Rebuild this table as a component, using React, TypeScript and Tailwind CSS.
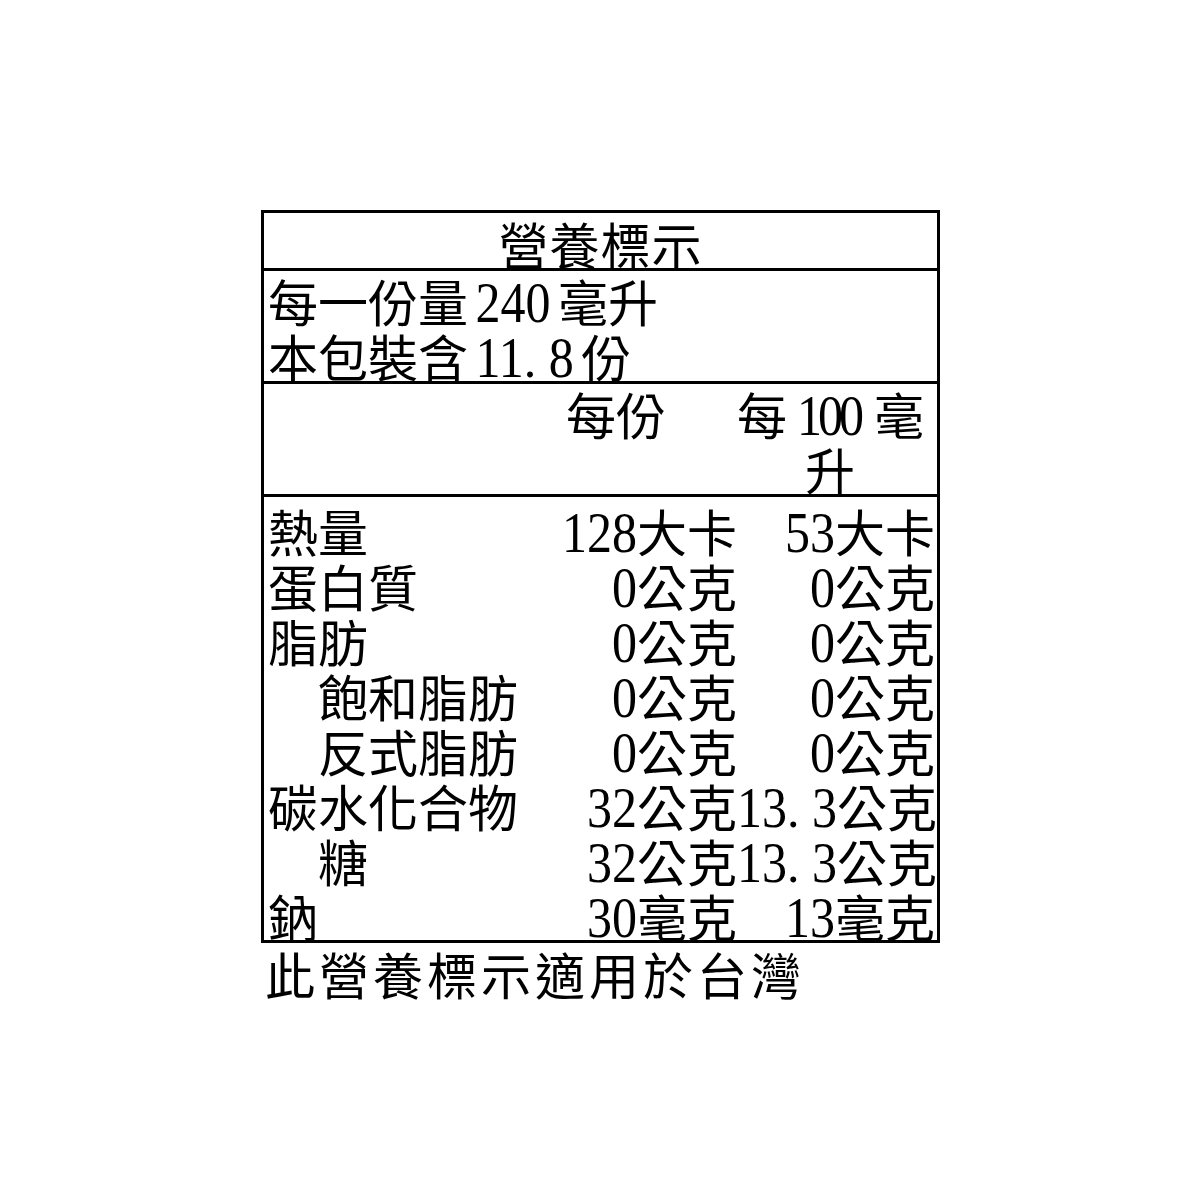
const rows: { label: string; indent?: boolean; per: string; per100: string }[] = [
  { label: "熱量", per: "128大卡", per100: "53大卡" },
  { label: "蛋白質", per: "0公克", per100: "0公克" },
  { label: "脂肪", per: "0公克", per100: "0公克" },
  { label: "飽和脂肪", indent: true, per: "0公克", per100: "0公克" },
  { label: "反式脂肪", indent: true, per: "0公克", per100: "0公克" },
  { label: "碳水化合物", per: "32公克", per100: "13.3公克" },
  { label: "糖", indent: true, per: "32公克", per100: "13.3公克" },
  { label: "鈉", per: "30毫克", per100: "13毫克" },
];

// digits in the label are tall and narrow; the decimal point sits on a half-width cell
function Num({ text }: { text: string }) {
  const tokens = text.match(/\d+|\.|[^\d.]+/g) ?? [];
  return (
    <>
      {tokens.map((t, i) =>
        /\d/.test(t) ? (
          <span key={i} className="inline-block scale-y-[1.12] origin-[50%_44px]">
            {t}
          </span>
        ) : t === "." ? (
          <span key={i} className="inline-block w-[0.5em] text-left">
            .
          </span>
        ) : (
          <span key={i}>{t}</span>
        )
      )}
    </>
  );
}

export default function App() {
  return (
    <div className="min-h-[1200px] bg-white text-black font-['Liberation_Serif','Noto_Sans_CJK_TC',serif] text-[50px] leading-[55px]">
      <div className="pt-[210px] pl-[261px]">
        <div className="w-[679px] border-[3px] border-black">
          <div className="h-[58px] pt-[8px] text-center tracking-[1px] border-b-[3px] border-black">
            營養標示
          </div>

          <div className="h-[113px] pt-[7px] pl-[4px] border-b-[3px] border-black [word-spacing:-5px]">
            <div>
              每一份量 <Num text="240" /> 毫升
            </div>
            <div>
              本包裝含 <Num text="11.8" /> 份
            </div>
          </div>

          <div className="grid grid-cols-[231px_242px_200px] h-[113px] pt-[7px] border-b-[3px] border-black">
            <div />
            <div className="text-center">每份</div>
            <div className="whitespace-nowrap">
              <div>
                每
                <span className="ml-[10px] tracking-[-4px]">
                  <Num text="100" />
                </span>
                <span className="ml-[14px]">毫</span>
              </div>
              <div className="pl-[68px]">升</div>
            </div>
          </div>

          <div className="pt-[3px]">
            {rows.map((r) => (
              <div key={r.label} className="grid grid-cols-[231px_242px_200px] h-[55px] pt-[8px]">
                <div className={r.indent ? "pl-[54px] whitespace-nowrap" : "pl-[4px] whitespace-nowrap"}>
                  {r.label}
                </div>
                <div className="text-right whitespace-nowrap">
                  <Num text={r.per} />
                </div>
                <div className="text-right whitespace-nowrap pr-[2px]">
                  <Num text={r.per100} />
                </div>
              </div>
            ))}
          </div>
        </div>

        <div className="pt-[8px] pl-[4px] tracking-[4px]">此營養標示適用於台灣</div>
      </div>
    </div>
  );
}
